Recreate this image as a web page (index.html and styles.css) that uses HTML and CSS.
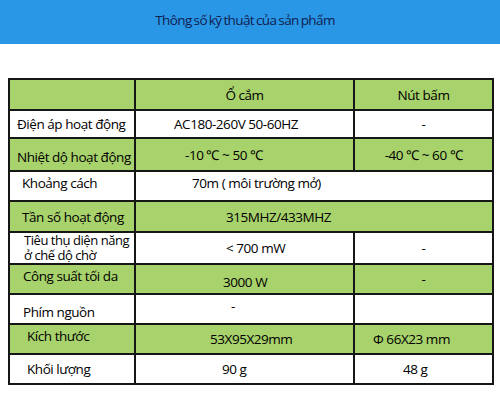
FILE: index.html
```html
<!DOCTYPE html>
<html lang="vi">
<head>
<meta charset="utf-8">
<link rel="stylesheet" href="styles.css">
</head>
<body>
<header class="banner"><h1 class="title">Thông số kỹ thuật của sản phẩm</h1></header>
<main class="wrap">
<table class="spec">
  <colgroup><col class="c1"><col class="c2"><col class="c3"></colgroup>
  <tr class="g h31"><td></td><td class="mid">Ổ cắm</td><td class="mid">Nút bấm</td></tr>
  <tr class="w h28"><td class="lab p9">Điện áp hoạt động</td><td class="v"><span class="in40">AC180-260V 50-60HZ</span></td><td class="mid">-</td></tr>
  <tr class="g h33"><td class="lab p9 low">Nhiệt dộ hoạt động</td><td class="v"><span class="in51">-10 ℃ ~ 50 ℃</span></td><td class="mid">-40 ℃ ~ 60 ℃</td></tr>
  <tr class="w h30"><td class="lab p14 up">Khoảng cách</td><td colspan="2" class="v up"><span class="in58">70m ( môi trường mở)</span></td></tr>
  <tr class="g h31"><td class="lab p14">Tần số hoạt động</td><td colspan="2" class="v"><span class="in92">315MHZ/433MHZ</span></td></tr>
  <tr class="w h31"><td class="lab p16 two">Tiêu thụ diện năng<br>ở chế dộ chờ</td><td class="v"><span class="in92">&lt; 700 mW</span></td><td class="mid">-</td></tr>
  <tr class="g h30"><td class="lab p15 up">Công suất tối da</td><td class="v low"><span class="in89">3000 W</span></td><td class="mid">-</td></tr>
  <tr class="w h30"><td class="lab p15 low">Phím nguồn</td><td class="v up"><span class="in97">-</span></td><td></td></tr>
  <tr class="g h30"><td class="lab p19 up">Kích thước</td><td class="v"><span class="in76">53X95X29mm</span></td><td class="v"><span class="in20">Φ 66X23 mm</span></td></tr>
  <tr class="w h30"><td class="lab p19">Khối lượng</td><td class="v"><span class="in88">90 g</span></td><td class="v"><span class="in50">48 g</span></td></tr>
</table>
</main>
</body>
</html>
```

FILE: styles.css
```css
html, body {
  margin: 0;
  padding: 0;
  background: #ffffff;
  font-family: "Open Sans", "Liberation Sans", sans-serif;
  color: #000;
}
.banner {
  height: 44px;
  background: #2a97e6;
  display: flex;
  align-items: center;
  justify-content: center;
}
.title {
  margin: 0 10px 4px 0;
  font-size: 13.5px;
  font-weight: 400;
  color: #102050;
  letter-spacing: -0.6px;
  word-spacing: -1px;
}
.wrap {
  padding: 34px 0 0 8px;
}
.spec {
  border-collapse: collapse;
  width: 484px;
  table-layout: fixed;
  font-size: 13.5px;
  letter-spacing: -0.45px;
}
.c1 { width: 126px; }
.c2 { width: 219px; }
.c3 { width: 139px; }
.spec td {
  border: 2px solid #161616;
  padding: 0;
  white-space: nowrap;
  line-height: 16px;
}
.g td { background: #a8d26b; }
.w td { background: #ffffff; }
.h28 { height: 28px; }
.h30 { height: 30px; }
.h31 { height: 31px; }
.h33 { height: 33px; }
.mid { text-align: center; }
.lab { text-align: left; }
.p9 { padding-left: 7px !important; }
.p14 { padding-left: 12px !important; }
.p15 { padding-left: 13px !important; }
.p16 { padding-left: 14px !important; }
.p19 { padding-left: 17px !important; }
.up { padding-bottom: 6px !important; }
.low { padding-top: 5px !important; }
.two { line-height: 15px !important; font-size: 13px; }
.v { text-align: left; }
.in20 { padding-left: 18px; }
.in40 { padding-left: 38px; }
.in50 { padding-left: 48px; }
.in51 { padding-left: 49px; }
.in58 { padding-left: 56px; }
.in76 { padding-left: 74px; }
.in88 { padding-left: 86px; }
.in89 { padding-left: 87px; }
.in92 { padding-left: 90px; }
.in97 { padding-left: 95px; }
```
